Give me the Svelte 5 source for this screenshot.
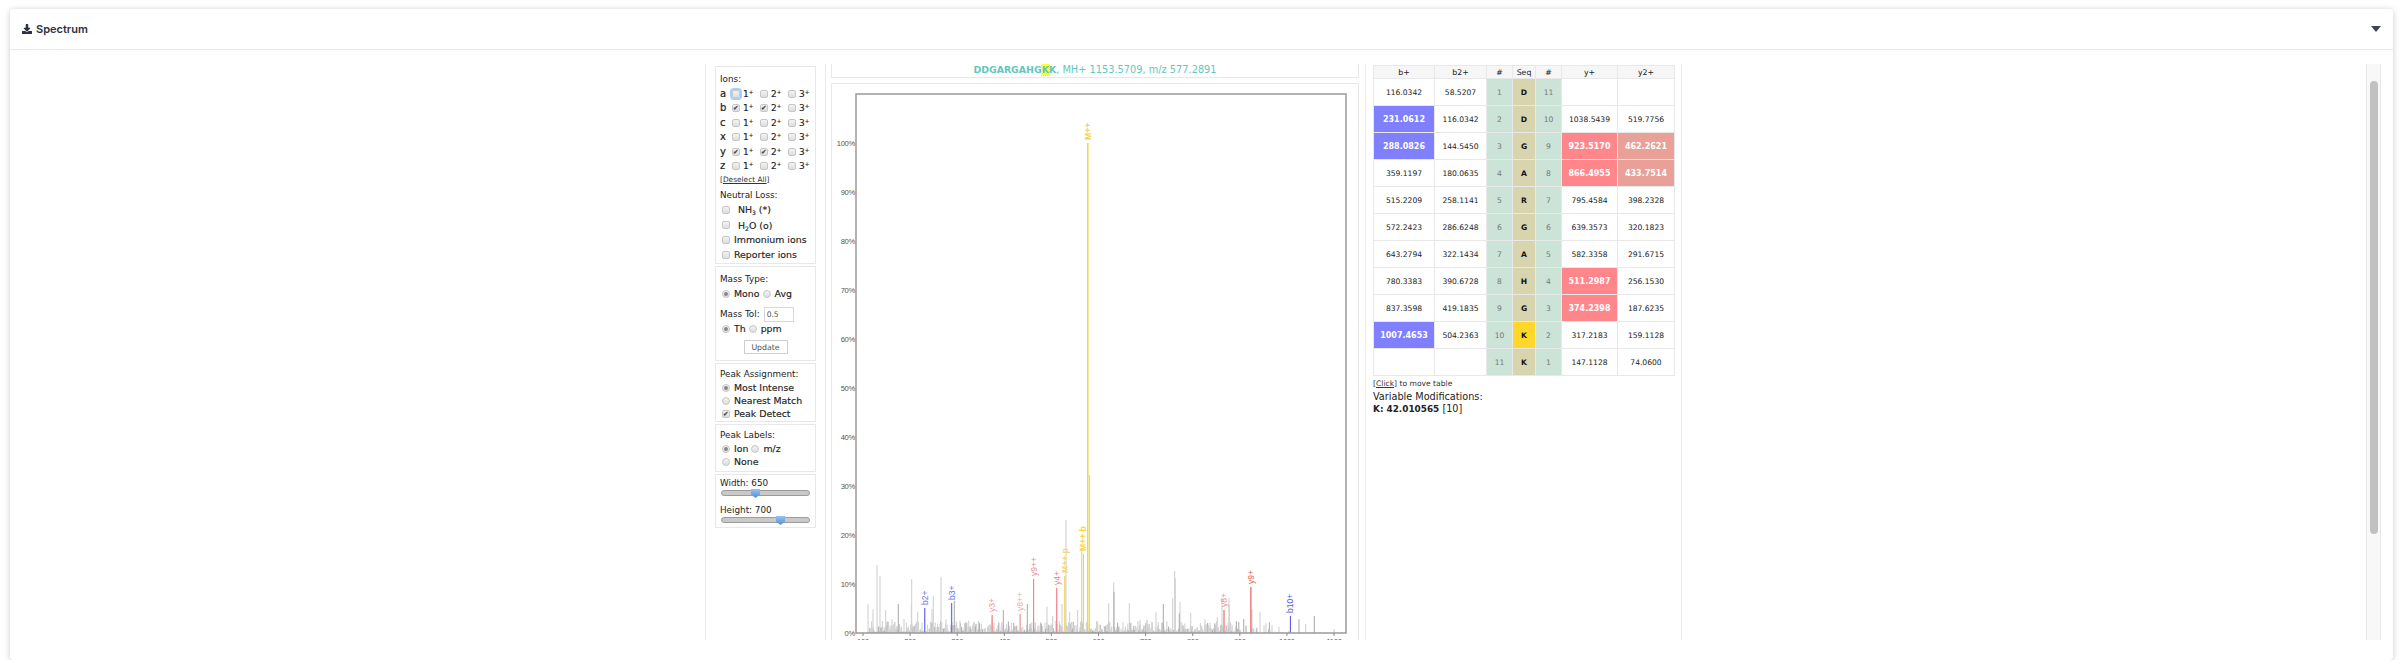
<script lang="ts">
  const ions = [
    { n: 'a', on: [] },
    { n: 'b', on: [1, 2] },
    { n: 'c', on: [] },
    { n: 'x', on: [] },
    { n: 'y', on: [1, 2] },
    { n: 'z', on: [] }
  ];

  const B = 'blue', R = 'red', P = 'pink';
  const rows = [
    ['116.0342', '', '58.5207', '', 1, 'D', 11, '', '', '', ''],
    ['231.0612', B, '116.0342', '', 2, 'D', 10, '1038.5439', '', '519.7756', ''],
    ['288.0826', B, '144.5450', '', 3, 'G', 9, '923.5170', R, '462.2621', P],
    ['359.1197', '', '180.0635', '', 4, 'A', 8, '866.4955', R, '433.7514', P],
    ['515.2209', '', '258.1141', '', 5, 'R', 7, '795.4584', '', '398.2328', ''],
    ['572.2423', '', '286.6248', '', 6, 'G', 6, '639.3573', '', '320.1823', ''],
    ['643.2794', '', '322.1434', '', 7, 'A', 5, '582.3358', '', '291.6715', ''],
    ['780.3383', '', '390.6728', '', 8, 'H', 4, '511.2987', R, '256.1530', ''],
    ['837.3598', '', '419.1835', '', 9, 'G', 3, '374.2398', R, '187.6235', ''],
    ['1007.4653', B, '504.2363', '', 10, 'K', 2, '317.2183', '', '159.1128', ''],
    ['', '', '', '', 11, 'K', 1, '147.1128', '', '74.0600', '']
  ];

  // chart is drawn in page coordinates through the viewBox
  const base = 633;
  const mz = (m: number) => 863 + (m - 100) * 0.471;

  const leftPeaks = [
    [36, 222], [51, 238], [63, 105], [72, 138], [89, 240], [127, 222, 1], [108, 268], [144, 267], [167, 148],
    [166, 222], [185, 245], [232, 198], [228, 237], [255, 141], [295, 212, 1], [270, 268], [312, 272], [338, 272],
    [370, 280, 1], [442, 240, 1], [514, 222, 1], [573, 230], [590, 258], [618, 222], [641, 245], [665, 240], [677, 60]
  ].map(([x, y, d]) => ({ x: 856 + x / 3, top: 530 + y / 3, dark: !!d }));

  const rightPeaks = [
    [26, 220], [41, 158], [42, 185, 1], [88, 220], [120, 270], [141, 270], [168, 245], [190, 222, 1], [224, 123],
    [226, 145], [218, 205], [240, 215], [238, 250, 1], [272, 248], [315, 268], [352, 262], [366, 205], [387, 205],
    [388, 230], [431, 267, 1], [456, 238], [480, 245], [498, 280], [516, 285], [537, 290], [597, 268, 1], [617, 282],
    [643, 258, 1], [702, 297]
  ].map(([x, y, d]) => ({ x: 1100 + x / 3, top: 530 + y / 3, dark: !!d }));

  let seed = 77;
  const rnd = () => {
    seed = (seed * 16807) % 2147483647;
    return seed / 2147483647;
  };
  const noise = [];
  for (let x = 868; x < 1290; x += 0.6) {
    if (x > 1240 && rnd() < 0.8) continue;
    const r = rnd();
    noise.push({ x, top: base - 1 - r * r * 11, dark: rnd() < 0.3 });
  }

  const greys = [
    ...noise,
    ...leftPeaks,
    ...rightPeaks,
    { x: 1066, top: 520, dark: false },
    { x: 1089.5, top: 475, dark: false }
  ];

  const labelled = [
    { x: mz(231.06), h: 25, c: '#6f6ff0', t: 'b2+', w: 1.3 },
    { x: mz(288.08), h: 30, c: '#6f6ff0', t: 'b3+', w: 1.3 },
    { x: mz(374.24), h: 18, c: '#f49a9a', t: 'y3+', w: 1.6 },
    { x: mz(433.75), h: 19, c: '#eeb0ac', t: 'y8++', w: 1.6 },
    { x: mz(462.26), h: 54, c: '#ee8a8a', t: 'y9++', w: 1.2 },
    { x: mz(511.3), h: 45, c: '#f07f84', t: 'y4+', w: 1.2 },
    { x: mz(528.5), h: 57, c: '#f2d97a', t: 'M++ p', w: 1.8, y: 1 },
    { x: mz(568), h: 79, c: '#ffd42a', t: 'M++ b', w: 1.2, y: 1 },
    { x: mz(577.29), h: 490, c: '#f5d33c', t: 'M++', w: 1.5, y: 1 },
    { x: mz(866.5), h: 23, c: '#f4908f', t: 'y8+', w: 1.6 },
    { x: mz(923.52), h: 46, c: '#e06060', t: 'y9+', w: 1.2 },
    { x: mz(1007.47), h: 17, c: '#5a5ae8', t: 'b10+', w: 1.1 }
  ];

  const yTicks = [0, 10, 20, 30, 40, 50, 60, 70, 80, 90, 100];
  const xTicks = [100, 200, 300, 400, 500, 600, 700, 800, 900, 1000, 1100];
</script>

<div class="card">
  <div class="head">
    <div class="title">
      <svg class="dl" viewBox="0 0 512 512" aria-hidden="true">
        <path d="M216 0h80c13.3 0 24 10.7 24 24v168h87.7c17.8 0 26.7 21.5 14.1 34.1L269.7 378.3c-7.5 7.5-19.8 7.5-27.3 0L90.1 226.1c-12.6-12.6-3.7-34.1 14.1-34.1H192V24c0-13.3 10.7-24 24-24zm296 376v112c0 13.3-10.7 24-24 24H24c-13.3 0-24-10.7-24-24V376c0-13.3 10.7-24 24-24h146.7l49 49c20.1 20.1 52.5 20.1 72.6 0l49-49H488c13.3 0 24 10.7 24 24z" />
      </svg>
      <span>Spectrum</span>
    </div>
    <span class="caret"></span>
  </div>

  <div class="body">
    <div class="scroll">
      <div class="centre">
        <div class="viewer">
          <div class="col-opts">
            <div class="box ions">
              <div class="lbl">Ions:</div>
              {#each ions as ion, i}
                <div class="ion-row">
                  <b>{ion.n}</b>
                  {#each [1, 2, 3] as z}
                    <label class="ion">
                      <input type="checkbox" class="cb" class:focus={i === 0 && z === 1} checked={ion.on.includes(z)} />
                      <span>{z}<sup>+</sup></span>
                    </label>
                  {/each}
                </div>
              {/each}
              <div class="deselect">[<u>Deselect All</u>]</div>
              <div class="lbl nl">Neutral Loss:</div>
              <label class="opt indent"><input type="checkbox" class="cb" /><span>NH<sub>3</sub> (*)</span></label>
              <label class="opt indent"><input type="checkbox" class="cb" /><span>H<sub>2</sub>O (o)</span></label>
              <label class="opt"><input type="checkbox" class="cb" /><span>Immonium ions</span></label>
              <label class="opt"><input type="checkbox" class="cb" /><span>Reporter ions</span></label>
            </div>

            <div class="box mass">
              <div class="lbl">Mass Type:</div>
              <div class="line">
                <label class="opt"><input type="radio" class="rd" name="mt" checked /><span>Mono</span></label>
                <label class="opt"><input type="radio" class="rd" name="mt" /><span>Avg</span></label>
              </div>
              <div class="tol"><span class="lbl">Mass Tol:</span><input class="num" value="0.5" /></div>
              <div class="line">
                <label class="opt"><input type="radio" class="rd" name="tu" checked /><span>Th</span></label>
                <label class="opt"><input type="radio" class="rd" name="tu" /><span>ppm</span></label>
              </div>
              <div class="btn-wrap"><button>Update</button></div>
            </div>

            <div class="box assign">
              <div class="lbl">Peak Assignment:</div>
              <label class="opt"><input type="radio" class="rd" name="pa" checked /><span>Most Intense</span></label>
              <label class="opt"><input type="radio" class="rd" name="pa" /><span>Nearest Match</span></label>
              <label class="opt"><input type="checkbox" class="cb" checked /><span>Peak Detect</span></label>
            </div>

            <div class="box labels">
              <div class="lbl">Peak Labels:</div>
              <div class="line">
                <label class="opt"><input type="radio" class="rd" name="pl" checked /><span>Ion</span></label>
                <label class="opt"><input type="radio" class="rd" name="pl" /><span>m/z</span></label>
              </div>
              <label class="opt"><input type="radio" class="rd" name="pl" /><span>None</span></label>
            </div>

            <div class="box sizes">
              <div class="lbl">Width: 650</div>
              <div class="track"><i class="thumb w"></i></div>
              <div class="lbl second">Height: 700</div>
              <div class="track"><i class="thumb h"></i></div>
            </div>
          </div>

          <div class="col-plot">
            <div class="seqbox">
              <span class="seq">DDGARGAHG<span class="mod">K</span>K</span>, MH+ 1153.5709, m/z 577.2891
            </div>
            <div class="plotbox">
              <svg class="chart" viewBox="832 84 528 560" width="528" height="560">
                {#each greys as p}
                  <line x1={p.x} x2={p.x} y1={base} y2={p.top} stroke={p.dark ? '#b0b0b0' : '#d2d2d2'} stroke-width="1.1" />
                {/each}
                {#each labelled as p}
                  <line x1={p.x} x2={p.x} y1={base} y2={base - p.h} stroke={p.c} stroke-width={p.w} />
                  <text
                    class="peak"
                    class:fat={p.y}
                    fill={p.c}
                    transform="translate({p.x + 3} {base - p.h - 3}) rotate(-90)">{p.t}</text>
                {/each}
                <rect x="856" y="94" width="490" height="539" fill="none" stroke="#9a9a9a" stroke-width="1.5" />
                {#each yTicks as t}
                  <text class="axis" x="855" y={base - t * 4.9 + 3} text-anchor="end">{t}%</text>
                {/each}
                {#each xTicks as t}
                  <line x1={mz(t)} x2={mz(t)} y1={base} y2={base + 3} stroke="#888" />
                  <text class="axis" x={mz(t)} y={base + 11} text-anchor="middle">{t}</text>
                {/each}
              </svg>
            </div>
          </div>

          <div class="col-table">
            <table>
              <colgroup>
                <col style="width:61px" /><col style="width:52px" /><col style="width:26px" /><col style="width:23px" />
                <col style="width:26px" /><col style="width:56px" /><col style="width:57px" />
              </colgroup>
              <thead>
                <tr><th>b+</th><th>b2+</th><th>#</th><th>Seq</th><th>#</th><th>y+</th><th>y2+</th></tr>
              </thead>
              <tbody>
                {#each rows as r, i}
                  <tr>
                    <td class={r[1]}>{r[0]}</td>
                    <td class={r[3]}>{r[2]}</td>
                    <td class="idx">{r[4]}</td>
                    <td class="res" class:modres={i === 9}>{r[5]}</td>
                    <td class="idx">{r[6]}</td>
                    <td class={r[8]}>{r[7]}</td>
                    <td class={r[10]}>{r[9]}</td>
                  </tr>
                {/each}
              </tbody>
            </table>
            <div class="move">[<u>Click</u>] to move table</div>
            <div class="varmods">Variable Modifications:</div>
            <div class="varmods"><b>K: 42.010565</b> [10]</div>
          </div>
        </div>
      </div>
      <div class="scrollbar"><div class="bar"></div></div>
    </div>
  </div>
</div>

<style>
  :global(body) {
    margin: 0;
    background: #fff;
  }

  .card {
    margin: 9px 13px 0 10px;
    height: 651px;
    box-sizing: border-box;
    background: #fff;
    border-radius: 4px;
    box-shadow: 0 1px 6px rgba(0, 0, 0, 0.22);
  }

  .head {
    height: 41px;
    box-sizing: border-box;
    border-bottom: 1px solid #e9e9e9;
    display: flex;
    align-items: center;
    justify-content: space-between;
    padding: 0 12px;
  }

  .title {
    display: flex;
    align-items: center;
    gap: 4px;
    font: 600 11px Inter, "Liberation Sans", sans-serif;
    color: #2b3044;
  }

  .dl {
    width: 10px;
    height: 10px;
    fill: #2b3044;
  }

  .caret {
    border-left: 5px solid transparent;
    border-right: 5px solid transparent;
    border-top: 6px solid #3f4459;
  }

  .body {
    padding: 14px 12px 0;
  }

  .scroll {
    height: 576px;
    overflow: hidden;
    display: flex;
  }

  .centre {
    flex: 1;
    min-width: 0;
    display: flex;
    justify-content: center;
  }

  .viewer {
    display: flex;
    width: 978px;
    height: 700px;
    flex: none;
    font: 9.4px "DejaVu Sans", Verdana, sans-serif;
    color: #222;
  }

  .scrollbar {
    width: 15px;
    flex: none;
    box-sizing: border-box;
    background: #f8f8f8;
    border-left: 1px solid #e8e8e8;
    border-right: 1px solid #e8e8e8;
    padding-top: 17px;
  }

  .bar {
    width: 8px;
    height: 453px;
    margin-left: 3px;
    border-radius: 4px;
    background: #c1c1c1;
  }

  /* options column */
  .col-opts {
    width: 121px;
    box-sizing: border-box;
    border-left: 1px solid #ececec;
    border-right: 1px solid #ececec;
    padding: 2px 9px 0;
    flex: none;
  }

  .box {
    border: 1px solid #e8e8e8;
    box-sizing: border-box;
    padding: 5px 4px 0;
    margin-bottom: 2px;
    line-height: 14.5px;
  }

  .ions { height: 198px; }
  .mass { height: 95px; }
  .assign { height: 59px; padding-top: 4px; line-height: 13px; }
  .labels { height: 48px; padding-top: 4px; line-height: 13px; }
  .sizes { height: 54px; padding-top: 2px; line-height: 13px; }

  .lbl {
    font-size: 8.8px;
  }

  .opt,
  .ion {
    -webkit-text-stroke: 0.15px #222;
  }

  .ion-row {
    display: grid;
    grid-template-columns: 12px 28px 28px 28px;
    align-items: center;
    font-size: 9px;
  }

  .ion-row b {
    font-weight: 400;
    font-size: 10px;
    -webkit-text-stroke: 0.2px #222;
  }

  .ion {
    display: flex;
    align-items: center;
    gap: 3px;
  }

  sup {
    font-size: 5.5px;
    line-height: 0;
    vertical-align: 3px;
  }

  sub {
    font-size: 6px;
    line-height: 0;
    vertical-align: -2px;
  }

  .cb,
  .rd {
    appearance: none;
    margin: 0;
    width: 8px;
    height: 8px;
    flex: none;
    box-sizing: border-box;
    border: 1px solid #c6c6c6;
    background: linear-gradient(#f3f3f3, #dedede);
    position: relative;
  }

  .cb {
    border-radius: 2px;
  }

  .rd {
    border-radius: 50%;
  }

  .cb:checked::after {
    content: "✔";
    position: absolute;
    left: 0;
    top: -1px;
    font: 6.5px/8px "DejaVu Sans", sans-serif;
    color: #444;
  }

  .rd:checked::after {
    content: "";
    position: absolute;
    left: 1px;
    top: 1px;
    width: 4px;
    height: 4px;
    border-radius: 50%;
    background: #888;
  }

  .cb.focus {
    box-shadow: 0 0 0 2px #a8cdf7;
  }

  .deselect {
    font-size: 7.4px;
    line-height: 11px;
    color: #333;
  }

  .nl {
    margin-top: 3px;
  }

  .opt {
    display: flex;
    align-items: center;
    gap: 4px;
    white-space: nowrap;
    padding-left: 2px;
  }

  .indent {
    gap: 8px;
    line-height: 15.5px;
  }

  .line {
    display: flex;
    gap: 1px;
    padding-left: 0;
  }

  .tol {
    display: flex;
    align-items: center;
    gap: 4px;
    margin-top: 6px;
  }

  .num {
    width: 30px;
    height: 15px;
    box-sizing: border-box;
    border: 1px solid #d8d8d8;
    padding: 0 2px;
    font: 7.6px "DejaVu Sans", sans-serif;
    color: #555;
  }

  .btn-wrap {
    text-align: center;
    margin-top: 3px;
  }

  button {
    height: 14px;
    width: 44px;
    padding: 0;
    background: #fff;
    border: 1px solid #cfcfcf;
    font: 7.8px "DejaVu Sans", sans-serif;
    color: #555;
  }

  .track {
    position: relative;
    height: 4px;
    margin: 0 1px;
    background: #c9c9c9;
    border: 1px solid #9c9c9c;
    border-radius: 3px;
  }

  .second {
    margin-top: 8px;
  }

  .thumb {
    position: absolute;
    top: -2px;
    width: 9px;
    height: 9px;
    background: linear-gradient(#9cc3ee, #4f8ed6);
    clip-path: polygon(0 0, 100% 0, 100% 60%, 50% 100%, 0 60%);
  }

  .thumb.w { left: 29px; }
  .thumb.h { left: 54px; }

  /* plot column */
  .col-plot {
    width: 539px;
    box-sizing: border-box;
    padding: 0 6px 0 5px;
    flex: none;
  }

  .seqbox {
    height: 14px;
    box-sizing: border-box;
    border: 1px solid #e8e8e8;
    border-top: 0;
    text-align: center;
    font: 9.8px/12px "DejaVu Sans", sans-serif;
    color: #5fc8bc;
    margin-bottom: 5px;
  }

  .seq {
    font-weight: 700;
    font-size: 9.4px;
  }

  .mod {
    background: #ffff33;
    outline: 1px dotted #e6e066;
  }

  .plotbox {
    border: 1px solid #e8e8e8;
    height: 600px;
    box-sizing: border-box;
  }

  .chart {
    display: block;
  }

  .axis {
    font: 7.6px "Liberation Sans", sans-serif;
    letter-spacing: -0.3px;
    fill: #555;
  }

  .peak {
    font: 8.6px "Liberation Sans", sans-serif;
  }

  .peak.fat {
    font-weight: 700;
  }

  /* fragment table */
  .col-table {
    width: 317px;
    flex: none;
    box-sizing: border-box;
    border-left: 1px solid #ececec;
    border-right: 1px solid #ececec;
    padding: 1px 7px 0;
  }

  table {
    border-collapse: collapse;
    table-layout: fixed;
    width: 301px;
    font-size: 7.6px;
  }

  th,
  td {
    border: 1px solid #e8e8e8;
    text-align: center;
    padding: 0;
  }

  th {
    height: 12px;
    background: #f6f6f6;
    font-weight: 400;
    font-size: 7.8px;
  }

  td {
    height: 26px;
  }

  td.idx {
    background: #cce3d8;
    color: #777;
  }

  td.res {
    background: #d8d4ae;
    color: #111;
    font-weight: 700;
  }

  td.modres {
    background: #ffd62a;
  }

  td.blue,
  td.red,
  td.pink {
    color: #fff;
    font-weight: 700;
    font-size: 8px;
  }

  td.blue { background: #8080ff; }
  td.red { background: #ff878c; }
  td.pink { background: #e8a098; }

  .move {
    font-size: 7.6px;
    line-height: 10px;
    margin-top: 3px;
    color: #333;
  }

  .varmods {
    font-size: 9.7px;
    line-height: 12px;
  }

  .varmods b {
    font-size: 8.9px;
  }

  .move + .varmods {
    margin-top: 2px;
  }
</style>
